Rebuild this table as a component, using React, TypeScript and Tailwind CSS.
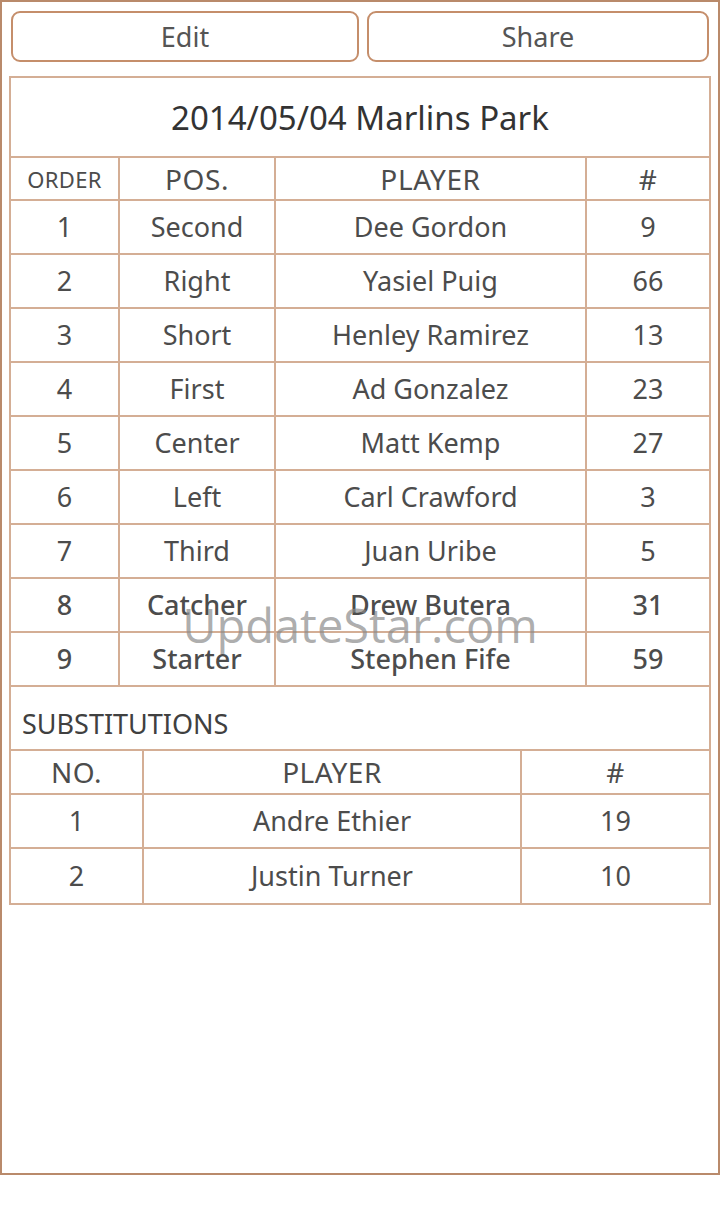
import React from "react";

const lineup = [
  ["1", "Second", "Dee Gordon", "9"],
  ["2", "Right", "Yasiel Puig", "66"],
  ["3", "Short", "Henley Ramirez", "13"],
  ["4", "First", "Ad Gonzalez", "23"],
  ["5", "Center", "Matt Kemp", "27"],
  ["6", "Left", "Carl Crawford", "3"],
  ["7", "Third", "Juan Uribe", "5"],
  ["8", "Catcher", "Drew Butera", "31"],
  ["9", "Starter", "Stephen Fife", "59"],
];

const subs = [
  ["1", "Andre Ethier", "19"],
  ["2", "Justin Turner", "10"],
];

export default function App() {
  return (
    <div
      className="w-[720px] h-[1230px] bg-white text-[#4c4c4c]"
      style={{ fontFamily: '"Noto Sans", "Open Sans", sans-serif' }}
    >
      <div className="relative w-[720px] h-[1175px] border-2 border-[#b98a6b] px-[7px] pt-[9px]">
        <div className="flex gap-2 px-[2px]">
          <button className="w-[348px] h-[51px] rounded-[9px] border-2 border-[#c58e6b] bg-white text-[27px] leading-none text-[#555]">
            Edit
          </button>
          <button className="flex-1 h-[51px] rounded-[9px] border-2 border-[#c58e6b] bg-white text-[27px] leading-none text-[#555]">
            Share
          </button>
        </div>

        <div className="mt-[14px] border-2 border-[#d4ae95]">
          <div className="h-[80px] border-b-2 border-[#d4ae95] flex items-center justify-center pt-[2px] text-[33px] text-[#333]">
            2014/05/04 Marlins Park
          </div>
          <div className="grid grid-cols-[109px_156px_311px_1fr] h-[43px] border-b-2 border-[#d4ae95] text-[28px] tracking-[0.6px]">
            <div className="border-r-2 border-[#d4ae95] flex items-center justify-center text-[22px] tracking-[0.3px]">ORDER</div>
            <div className="border-r-2 border-[#d4ae95] flex items-center justify-center">POS.</div>
            <div className="border-r-2 border-[#d4ae95] flex items-center justify-center">PLAYER</div>
            <div className="flex items-center justify-center">#</div>
          </div>
          {lineup.map((r, i) => (
            <div
              key={i}
              className={`grid grid-cols-[109px_156px_311px_1fr] h-[54px] border-b-2 border-[#d4ae95] text-[27px] ${i >= 7 ? "font-medium" : ""}`}
            >
              <div className="border-r-2 border-[#d4ae95] flex items-center justify-center">{r[0]}</div>
              <div className="border-r-2 border-[#d4ae95] flex items-center justify-center">{r[1]}</div>
              <div className="border-r-2 border-[#d4ae95] flex items-center justify-center">{r[2]}</div>
              <div className="flex items-center justify-center">{r[3]}</div>
            </div>
          ))}
          <div className="h-[64px] border-b-2 border-[#d4ae95] flex items-center pl-[11px] pt-[12px] text-[27px] text-[#404040]">
            SUBSTITUTIONS
          </div>
          <div className="grid grid-cols-[133px_378px_1fr] h-[44px] border-b-2 border-[#d4ae95] text-[28px] tracking-[0.5px]">
            <div className="border-r-2 border-[#d4ae95] flex items-center justify-center">NO.</div>
            <div className="border-r-2 border-[#d4ae95] flex items-center justify-center">PLAYER</div>
            <div className="flex items-center justify-center">#</div>
          </div>
          {subs.map((r, i) => (
            <div
              key={i}
              className={`grid grid-cols-[133px_378px_1fr] h-[54px] text-[27px] ${i < subs.length - 1 ? "border-b-2 border-[#d4ae95]" : ""}`}
            >
              <div className="border-r-2 border-[#d4ae95] flex items-center justify-center">{r[0]}</div>
              <div className="border-r-2 border-[#d4ae95] flex items-center justify-center">{r[1]}</div>
              <div className="flex items-center justify-center">{r[2]}</div>
            </div>
          ))}
        </div>

        <div
          className="absolute left-0 right-0 top-[588px] flex justify-center text-[47px] text-[#8a8a8a]/70 pointer-events-none"
          style={{ fontFamily: '"Open Sans", sans-serif' }}
        >
          UpdateStar.com
        </div>
      </div>
    </div>
  );
}
